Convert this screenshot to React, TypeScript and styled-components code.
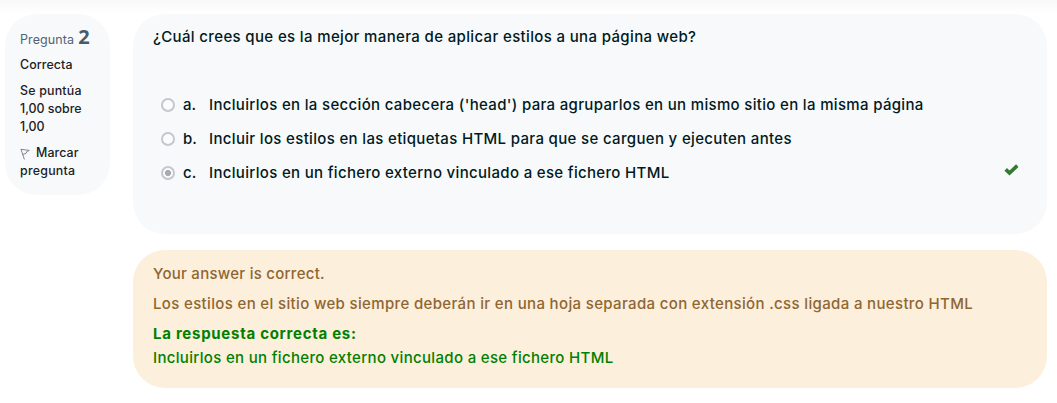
import React from 'react';
import styled, { createGlobalStyle } from 'styled-components';

const GlobalStyle = createGlobalStyle`
  * { box-sizing: border-box; }
  body {
    margin: 0;
    background: #fff;
    color: #001a1e;
    font: 500 15px/24px Inter, "Liberation Sans", sans-serif;
  }
  p, h3, h4 { margin: 0; font: inherit; }
`;

const Page = styled.main`
  display: flex;
  align-items: flex-start;
  gap: 23px;
  height: 403px;
  padding: 14px 10px 0 5px;
  overflow: hidden;
  background: linear-gradient(#f8f8f8, #fff 14px);
`;

const Info = styled.aside`
  width: 105px;
  height: 181px;
  padding: 13px 10px 0 15px;
  border-radius: 32px;
  background: #f8f9fb;
  color: #1d2125;
  font-size: 12.4px;
  line-height: 18px;
`;

const Number = styled.h3`
  display: flex;
  align-items: baseline;
  gap: 4px;
  height: 20px;
  margin-bottom: 9px;
  color: #4f6475;
  font-size: 12.5px;
  font-weight: 400;
  line-height: 22px;
  letter-spacing: 0.1px;
`;

const Digit = styled.span`
  color: #465c6b;
  font: 700 20px/20px "Noto Sans", sans-serif;
`;

const InfoText = styled.p`
  margin-bottom: 8px;
  white-space: nowrap;
`;

const Tracked = styled.span<{ $tracking: number }>`
  letter-spacing: ${({ $tracking }) => $tracking}px;
`;

const Flag = styled.svg`
  width: 10px;
  height: 12px;
  margin-right: 6px;
  vertical-align: -3px;
`;

const Content = styled.div`
  display: flex;
  flex: 1;
  flex-direction: column;
  gap: 16px;
`;

const Question = styled.section`
  height: 220px;
  padding: 11px 20px 0;
  border-radius: 32px;
  background: #f8f9fb;
`;

const Line = styled.p<{ $tracking?: number }>`
  white-space: nowrap;
  letter-spacing: ${({ $tracking = 0 }) => $tracking}px;
`;

const Answers = styled.div`
  display: flex;
  flex-direction: column;
  gap: 10px;
  padding: 44px 8px 0;
`;

const Answer = styled.label`
  display: flex;
  align-items: center;
  height: 24px;
`;

const Radio = styled.span<{ $checked?: boolean }>`
  width: 14px;
  height: 14px;
  margin-right: 8px;
  border: 2px solid #c6c6cd;
  border-radius: 50%;
  background: ${({ $checked }) =>
    $checked ? 'radial-gradient(circle, #a8a8b2 0 2.7px, #f8f9fb 3.5px)' : '#fcfcfd'};
`;

const Letter = styled.span`
  width: 26px;
`;

const Check = styled.svg`
  width: 15px;
  height: 12px;
  margin: -7px 0 0 auto;
  color: #357a32;
`;

const Feedback = styled.section`
  height: 138px;
  padding: 12px 20px;
  border-radius: 32px;
  background: #fcefdc;
  color: #8f6632;
`;

const FeedbackLine = styled(Line)`
  margin-bottom: 6px;
`;

const CorrectTitle = styled(Line)`
  color: #008000;
  font-weight: 700;
`;

const CorrectAnswer = styled(Line)`
  color: #008000;
`;

const answers = [
  { letter: 'a.', text: "Incluirlos en la sección cabecera ('head') para agruparlos en un mismo sitio en la misma página", tracking: 0.328 },
  { letter: 'b.', text: 'Incluir los estilos en las etiquetas HTML para que se carguen y ejecuten antes', tracking: 0.335 },
  { letter: 'c.', text: 'Incluirlos en un fichero externo vinculado a ese fichero HTML', tracking: 0.33, checked: true },
];

export default function App() {
  return (
    <>
      <GlobalStyle />
      <Page>
        <Info>
          <Number>Pregunta <Digit>2</Digit></Number>
          <InfoText><Tracked $tracking={0.1}>Correcta</Tracked></InfoText>
          <InfoText>
            <Tracked $tracking={0.2}>Se puntúa</Tracked><br />
            1,00 sobre<br />
            1,00
          </InfoText>
          <InfoText>
            <Flag viewBox="0 0 10 12" fill="none" stroke="#777b7e" strokeWidth=".9" aria-hidden="true">
              <path d="M.9 1 4.4 11.5M1 1.3 9.3 2.4 6.7 3.6 6.2 5.2 2.6 6.6" />
            </Flag>
            <Tracked $tracking={0.1}>Marcar</Tracked><br />
            <Tracked $tracking={0.25}>pregunta</Tracked>
          </InfoText>
        </Info>
        <Content>
          <Question>
            <Line $tracking={0.355}>¿Cuál crees que es la mejor manera de aplicar estilos a una página web?</Line>
            <Answers>
              {answers.map(({ letter, text, tracking, checked }) => (
                <Answer key={letter}>
                  <Radio $checked={checked} />
                  <Letter>{letter}</Letter>
                  <Line $tracking={tracking}>{text}</Line>
                  {checked && (
                    <Check viewBox="0 0 15 12" fill="none" stroke="currentColor" strokeWidth="3.6" aria-label="Correcta">
                      <path d="M1.7 5.4 5.5 9 13.3 1.6" />
                    </Check>
                  )}
                </Answer>
              ))}
            </Answers>
          </Question>
          <Feedback>
            <FeedbackLine $tracking={0.27}>Your answer is correct.</FeedbackLine>
            <FeedbackLine $tracking={0.348}>Los estilos en el sitio web siempre deberán ir en una hoja separada con extensión .css ligada a nuestro HTML</FeedbackLine>
            <CorrectTitle $tracking={0.72}>La respuesta correcta es:</CorrectTitle>
            <CorrectAnswer $tracking={0.33}>Incluirlos en un fichero externo vinculado a ese fichero HTML</CorrectAnswer>
          </Feedback>
        </Content>
      </Page>
    </>
  );
}
